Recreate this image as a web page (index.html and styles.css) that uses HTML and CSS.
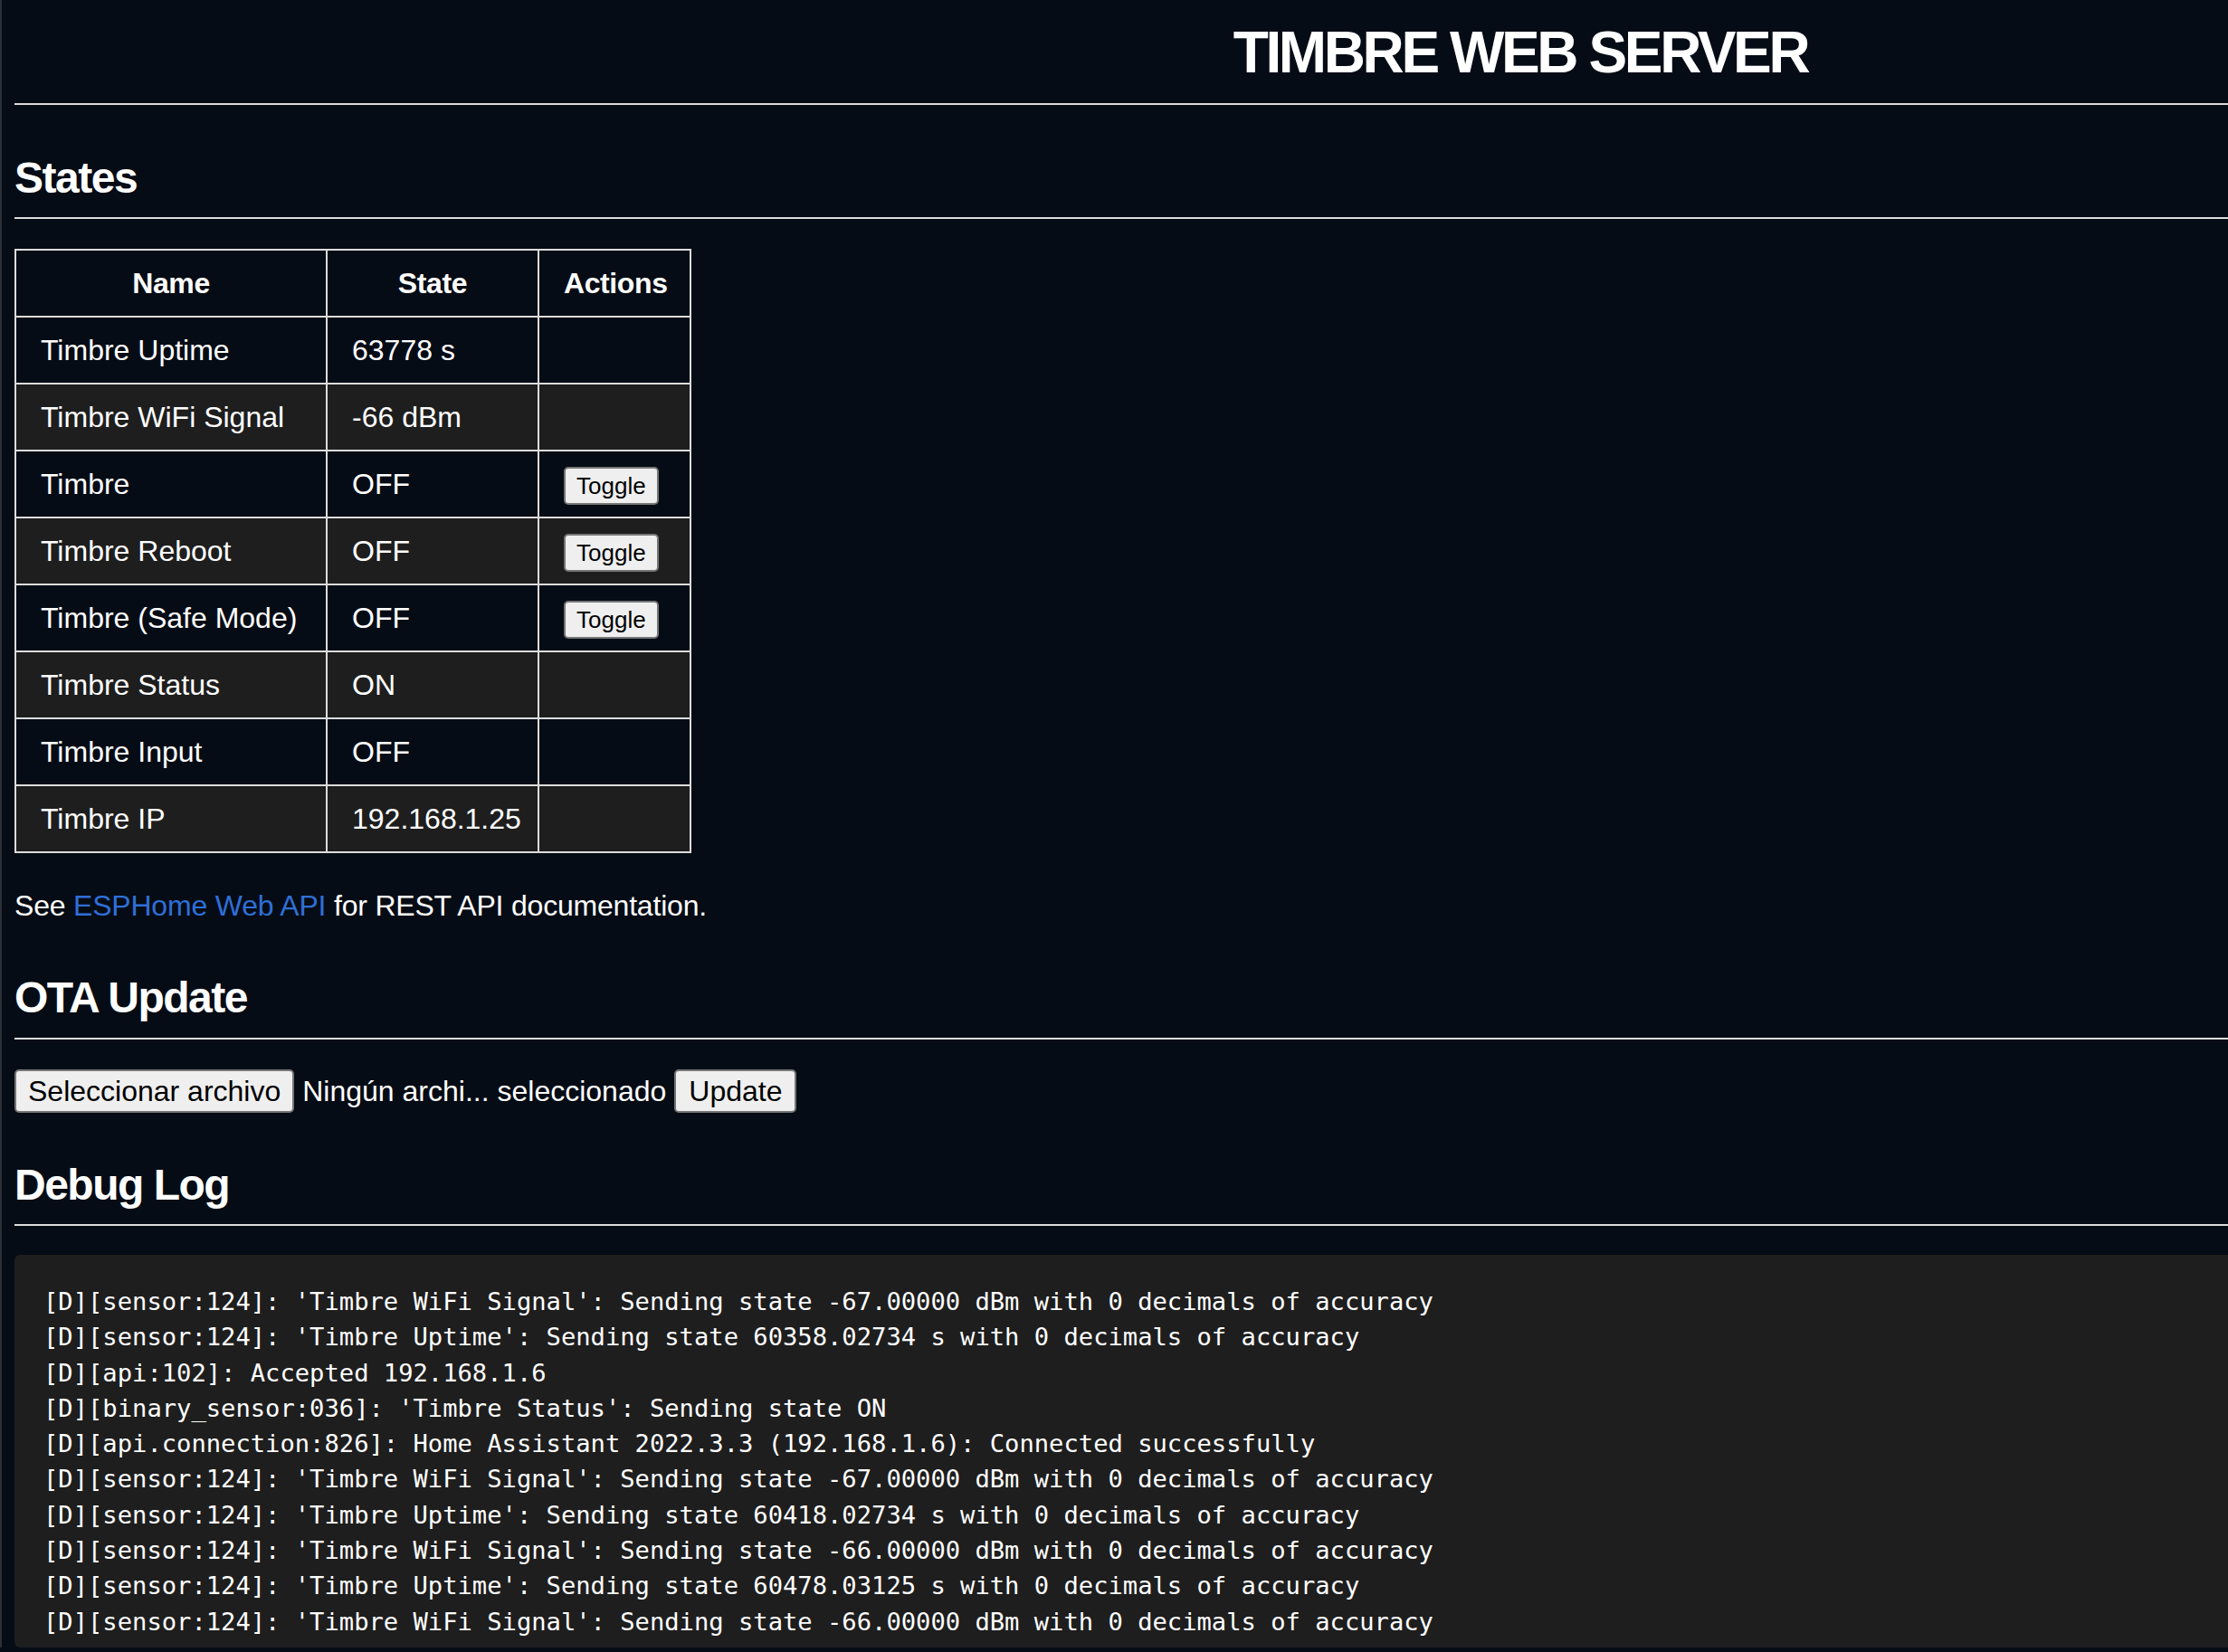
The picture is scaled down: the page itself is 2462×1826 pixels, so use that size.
FILE: index.html
```html
<!DOCTYPE html>
<html lang="es">
<head>
<meta charset="utf-8">
<title>Timbre Web Server</title>
<link rel="stylesheet" href="styles.css">
</head>
<body>
<div class="page">
  <h1 class="title">TIMBRE WEB SERVER</h1>
  <hr class="rule">

  <h2 class="section-title">States</h2>
  <hr class="rule">
  <table class="states">
    <colgroup>
      <col class="col-name">
      <col class="col-state">
      <col class="col-actions">
    </colgroup>
    <thead>
      <tr><th>Name</th><th>State</th><th>Actions</th></tr>
    </thead>
    <tbody>
      <tr><td>Timbre Uptime</td><td>63778 s</td><td></td></tr>
      <tr><td>Timbre WiFi Signal</td><td>-66 dBm</td><td></td></tr>
      <tr><td>Timbre</td><td>OFF</td><td><button class="toggle" type="button">Toggle</button></td></tr>
      <tr><td>Timbre Reboot</td><td>OFF</td><td><button class="toggle" type="button">Toggle</button></td></tr>
      <tr><td>Timbre (Safe Mode)</td><td>OFF</td><td><button class="toggle" type="button">Toggle</button></td></tr>
      <tr><td>Timbre Status</td><td>ON</td><td></td></tr>
      <tr><td>Timbre Input</td><td>OFF</td><td></td></tr>
      <tr><td>Timbre IP</td><td>192.168.1.25</td><td></td></tr>
    </tbody>
  </table>
  <p class="note">See <a class="link" href="#">ESPHome Web API</a> for REST API documentation.</p>

  <h2 class="section-title section-ota">OTA Update</h2>
  <hr class="rule">
  <form class="ota">
    <span class="file-btn">Seleccionar archivo</span>
    <span class="file-name">Ningún archi... seleccionado</span>
    <button class="update-btn" type="button">Update</button>
  </form>

  <h2 class="section-title section-debug">Debug Log</h2>
  <hr class="rule">
  <pre class="log">[D][sensor:124]: 'Timbre WiFi Signal': Sending state -67.00000 dBm with 0 decimals of accuracy
[D][sensor:124]: 'Timbre Uptime': Sending state 60358.02734 s with 0 decimals of accuracy
[D][api:102]: Accepted 192.168.1.6
[D][binary_sensor:036]: 'Timbre Status': Sending state ON
[D][api.connection:826]: Home Assistant 2022.3.3 (192.168.1.6): Connected successfully
[D][sensor:124]: 'Timbre WiFi Signal': Sending state -67.00000 dBm with 0 decimals of accuracy
[D][sensor:124]: 'Timbre Uptime': Sending state 60418.02734 s with 0 decimals of accuracy
[D][sensor:124]: 'Timbre WiFi Signal': Sending state -66.00000 dBm with 0 decimals of accuracy
[D][sensor:124]: 'Timbre Uptime': Sending state 60478.03125 s with 0 decimals of accuracy
[D][sensor:124]: 'Timbre WiFi Signal': Sending state -66.00000 dBm with 0 decimals of accuracy
[D][sensor:124]: 'Timbre Uptime': Sending state 60538.02734 s with 0 decimals of accuracy</pre>
</div>
</body>
</html>
```

FILE: styles.css
```css
html, body {
  margin: 0;
  padding: 0;
  background: #060c15;
  overflow: hidden;
}

body {
  border-left: 2px solid #2c2f36;
  padding-left: 14px;
  color: #ffffff;
  font-family: "Liberation Sans", Arial, Helvetica, sans-serif;
  font-size: 32px;
}

.page {
  width: 3328px;
}

.title {
  margin: 21px 0 0;
  font-size: 64px;
  line-height: 74px;
  font-weight: 700;
  letter-spacing: -3.4px;
  text-align: center;
}

.rule {
  margin: 19px 0 0;
  height: 0;
  border: 0;
  border-top: 2px solid #dcdcdc;
}

.section-title {
  margin: 53px 0 15px;
  font-size: 48px;
  line-height: 56px;
  font-weight: 700;
  letter-spacing: -1.5px;
}

.section-title + .rule {
  margin-top: 0;
}

.section-ota {
  margin-top: 55px;
  margin-bottom: 16px;
}

.states {
  margin-top: 33px;
  border-collapse: collapse;
  table-layout: fixed;
  width: 746px;
}

.col-name { width: 344px; }
.col-state { width: 234px; }
.col-actions { width: 168px; }

.states th,
.states td {
  border: 2px solid #dcdcdc;
  padding: 17px 27px;
  height: 38px;
  line-height: 38px;
  text-align: left;
  white-space: nowrap;
}

.states th {
  font-weight: 700;
  text-align: center;
  letter-spacing: -0.4px;
}

.states tbody tr:nth-child(even) {
  background: #1e1e1e;
}

.toggle {
  display: inline-block;
  vertical-align: middle;
  margin: -6px 0 -4px;
  padding: 4px 12px;
  line-height: 30px;
  font-family: "Liberation Sans", Arial, sans-serif;
  font-size: 26px;
  color: #000;
  background: #efefef;
  border: 2px solid #767676;
  border-radius: 5px;
}

.note {
  margin: 40px 0 0;
  line-height: 37px;
  letter-spacing: -0.2px;
}

.link {
  color: #2f6fd8;
  text-decoration: none;
}

.ota {
  margin: 33px 0 0;
  display: flex;
  align-items: center;
  gap: 9px;
}

.file-btn,
.update-btn {
  display: inline-block;
  padding: 3px 13px;
  line-height: 38px;
  font-family: "Liberation Sans", Arial, sans-serif;
  font-size: 32px;
  color: #000;
  background: #efefef;
  border: 2px solid #767676;
  border-radius: 5px;
}

.update-btn {
  padding: 3px 14px;
}

.file-name {
  line-height: 38px;
}

.section-debug {
  margin-top: 52px;
}

.log {
  margin: 32px 0 0;
  height: 434px;
  box-sizing: border-box;
  overflow: hidden;
  padding: 32px 32px;
  background: #1e1e1e;
  border-radius: 6px;
  color: #ffffff;
  font-family: "DejaVu Sans Mono", "Liberation Mono", monospace;
  font-size: 27.15px;
  line-height: 39.3px;
  white-space: pre;
}
```
